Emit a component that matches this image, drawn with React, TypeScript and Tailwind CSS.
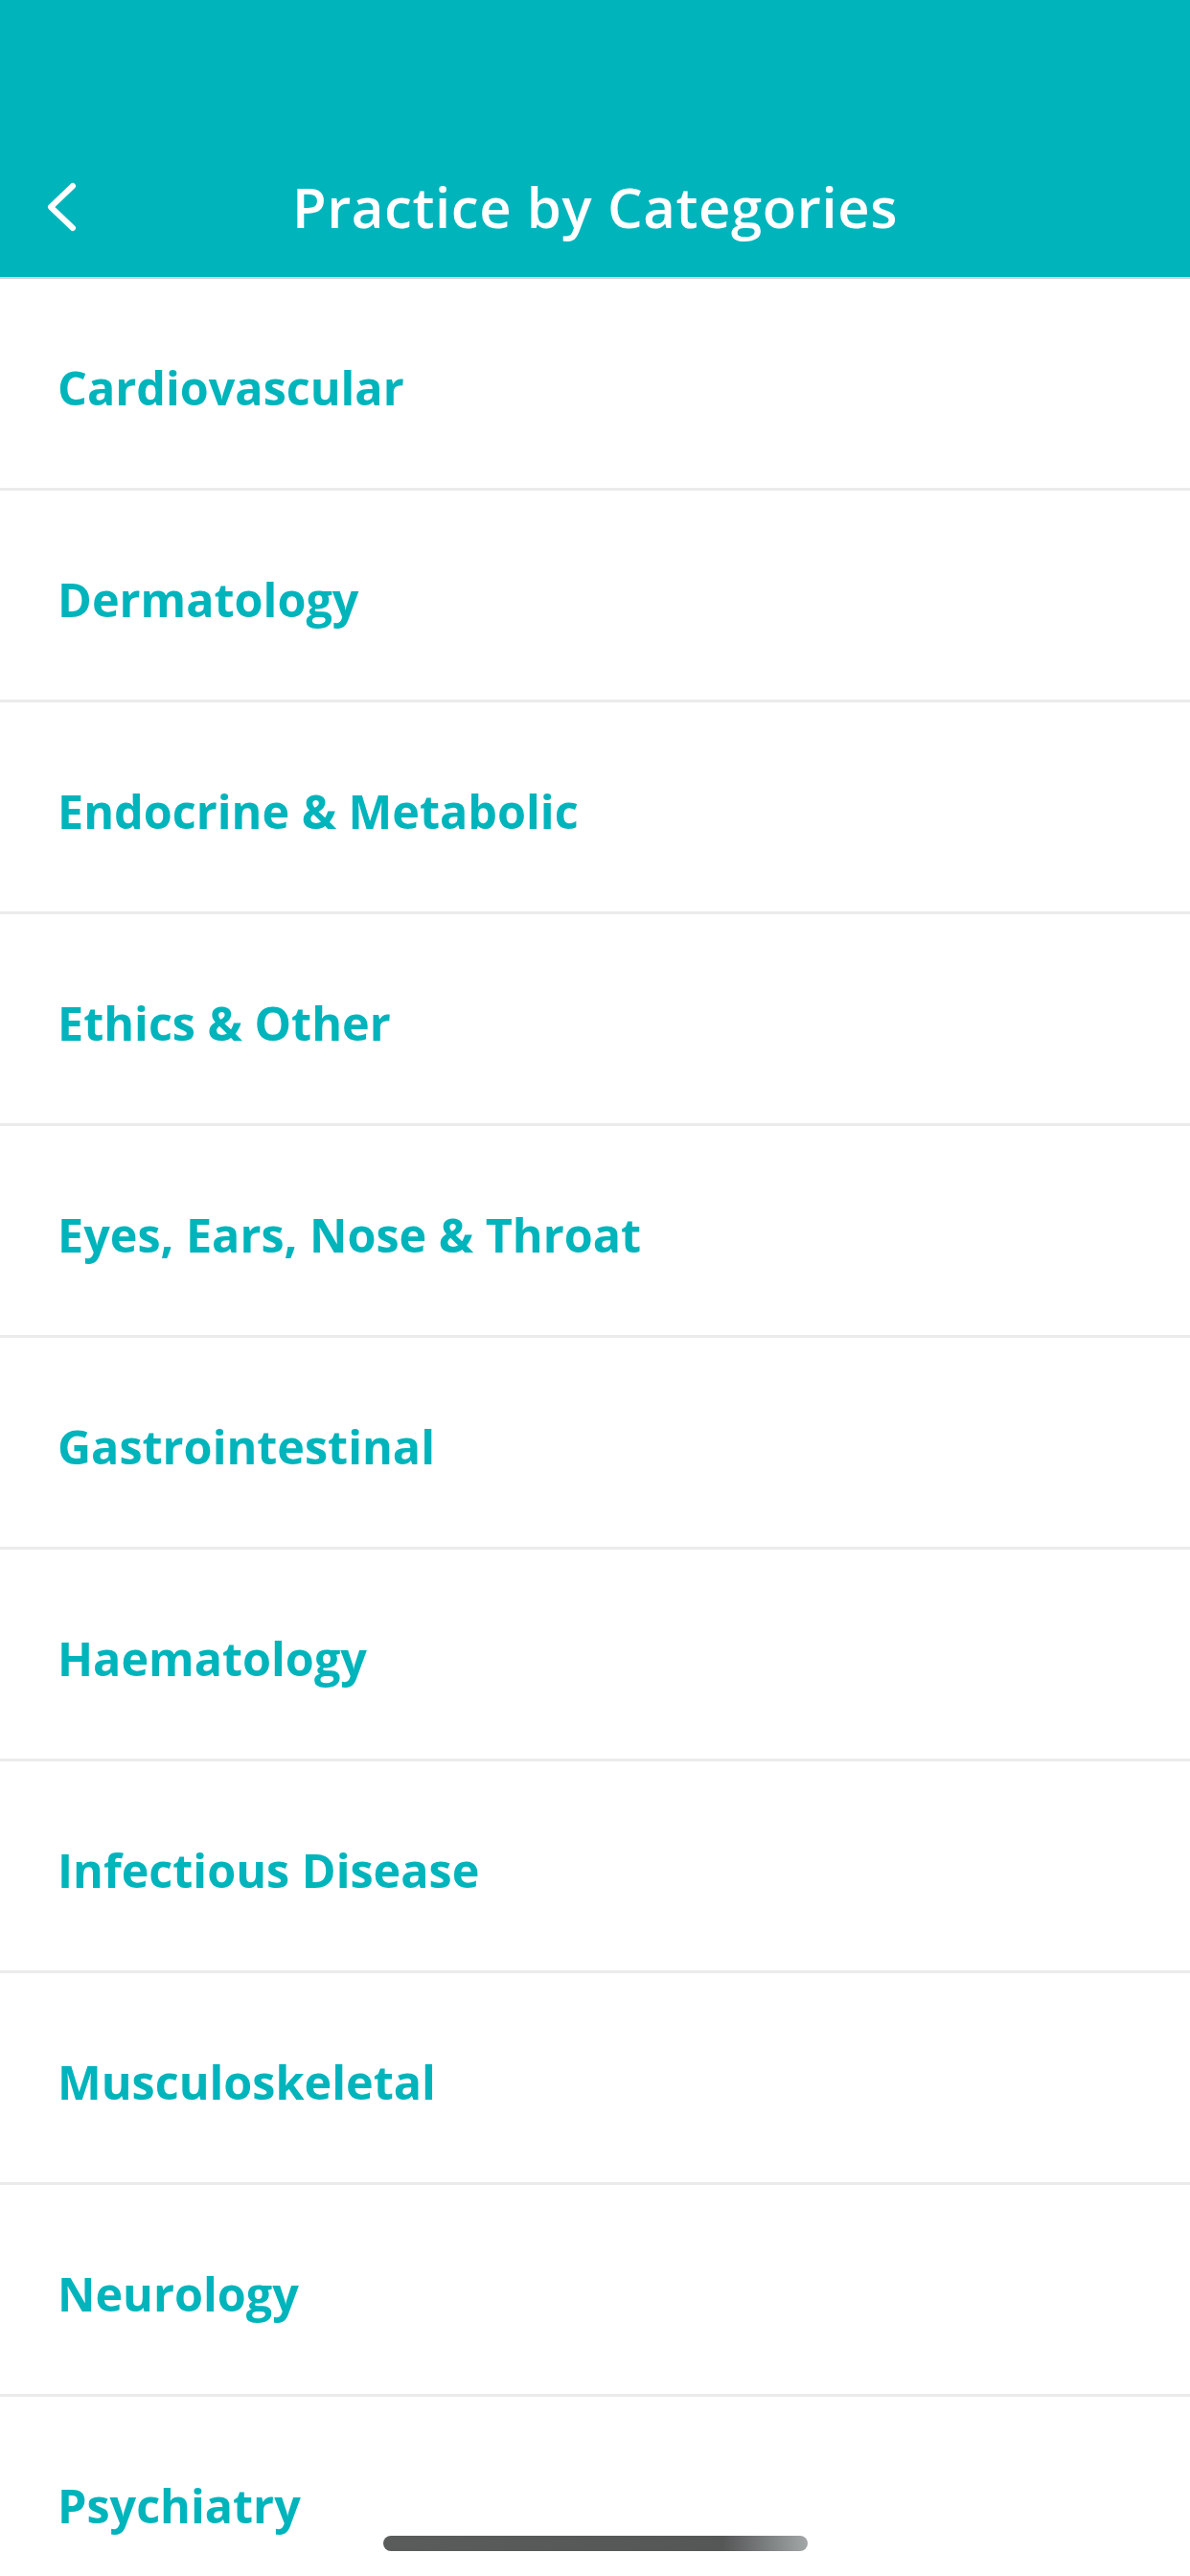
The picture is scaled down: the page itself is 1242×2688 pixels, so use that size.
const CATEGORIES = [
  "Cardiovascular",
  "Dermatology",
  "Endocrine & Metabolic",
  "Ethics & Other",
  "Eyes, Ears, Nose & Throat",
  "Gastrointestinal",
  "Haematology",
  "Infectious Disease",
  "Musculoskeletal",
  "Neurology",
  "Psychiatry",
];

function BackChevron() {
  return (
    <svg width="34" height="54" viewBox="0 0 34 54" fill="none">
      <path
        d="M29 5 L6 27 L29 49"
        stroke="#ffffff"
        strokeWidth="6"
        strokeLinecap="round"
        strokeLinejoin="round"
      />
    </svg>
  );
}

export default function App() {
  return (
    <div
      className="relative h-[2688px] w-[1242px] overflow-hidden bg-white"
      style={{ fontFamily: '"Open Sans", "Noto Sans", sans-serif' }}
    >
      {/* Header */}
      <div className="flex h-[291px] flex-col justify-end border-b-[2px] border-[#cfd3d3] bg-[#00b4bc]">
        <div className="grid h-[146px] grid-cols-[1fr_auto_1fr] items-center">
          <div className="flex items-center pl-[47px]">
            <button className="flex items-center">
              <BackChevron />
            </button>
          </div>
          <h1 className="text-[58px] font-semibold leading-none tracking-[0.6px] text-white">
            Practice by Categories
          </h1>
          <div />
        </div>
      </div>

      {/* List */}
      <ul>
        {CATEGORIES.map((name) => (
          <li
            key={name}
            className="flex h-[221px] items-center border-b-[3px] border-[#ebebeb] pl-[60px] pt-[8px]"
          >
            <span className="text-[48.5px] font-bold leading-none text-[#00b4bc]">{name}</span>
          </li>
        ))}
      </ul>

      {/* Home indicator */}
      <div className="absolute bottom-[26px] left-[400px] h-[16px] w-[443px] rounded-full bg-gradient-to-r from-[#5a5c5c] via-[#555757] via-80% to-[#a3a7a7]" />
    </div>
  );
}
